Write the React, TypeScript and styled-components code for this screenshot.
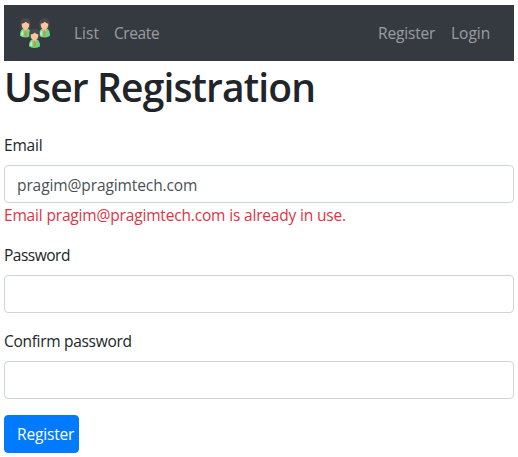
import React from "react";
import styled, { createGlobalStyle } from "styled-components";

const GlobalStyle = createGlobalStyle`
  *, *::before, *::after { box-sizing: border-box; }
  body {
    margin: 0;
    background: #fff;
    color: #212529;
    font: 400 15.5px/24px "Segoe UI", "Open Sans", "Noto Sans", sans-serif;
  }
`;

const Page = styled.div`
  padding: 5px 4px 0;
`;

const Navbar = styled.nav`
  display: flex;
  align-items: center;
  height: 56px;
  padding: 0 16px;
  background: #343a40;
`;

const Brand = styled.a`
  display: flex;
  margin-right: 16px;
`;

const NavGroup = styled.div<{ $end?: boolean }>`
  display: flex;
  margin-left: ${(p) => (p.$end ? "auto" : "0")};
`;

const NavLink = styled.a<{ $width: number; $spacing?: number }>`
  box-sizing: content-box;
  width: ${(p) => p.$width}px;
  padding: 8px;
  color: rgba(255, 255, 255, 0.5);
  letter-spacing: ${(p) => p.$spacing ?? 0}px;
  white-space: nowrap;
`;

const Title = styled.h1`
  margin: 0 0 22px;
  padding-top: 2px;
  font-size: 39px;
  font-weight: 600;
  line-height: 48px;
  letter-spacing: -0.87px;
  white-space: nowrap;
`;

const Field = styled.div`
  margin-bottom: 16px;
`;

const Label = styled.label<{ $spacing?: number }>`
  display: block;
  margin-bottom: 8px;
  letter-spacing: ${(p) => p.$spacing ?? 0}px;
`;

const Input = styled.input`
  display: block;
  width: 100%;
  height: 38px;
  padding: 7px 12px 5px;
  border: 1px solid #ced4da;
  border-radius: 4px;
  outline: 0;
  background: #fff;
  color: #495057;
  font: inherit;
  letter-spacing: -0.1px;
`;

const ErrorText = styled.div`
  color: #dc3545;
  letter-spacing: -0.17px;
  white-space: nowrap;
`;

const SubmitButton = styled.button`
  display: block;
  width: 75px;
  height: 38px;
  padding: 6px 0 6px 12px;
  border: 1px solid #007bff;
  border-radius: 4px;
  background: #007bff;
  color: #fff;
  font: inherit;
  letter-spacing: -0.17px;
  text-align: left;
`;

const Person = ({ x, y }: { x: number; y: number }) => (
  <g transform={`translate(${x} ${y})`}>
    <path d="M0.2 10.5V5.2Q0.4 0 5.5 0T10.8 5.2V10.5Z" fill="#48474a" />
    <path d="M0 17.5Q0 11.5 3 10.6H8Q11 11.5 11 17.5Q9.5 19.2 5.5 19.2T0 17.5Z" fill="#65d982" />
    <path d="M1 16.8Q1.1 13 3.1 12.2L3.5 17.5Z" fill="#b6f3c9" />
    <path d="M3.7 9H7.3V12L5.5 14L3.7 12Z" fill="#edae84" />
    <path d="M1.7 5.6Q4.8 5.2 5.8 3.6Q7 5.1 9.3 5.6Q9.4 11.1 5.5 11.3T1.7 5.6Z" fill="#fac6a1" />
    <path d="M4.7 12.5H6.3L6.7 17.2L5.5 18.4L4.4 17.2Z" fill="#db8c39" />
  </g>
);

const Logo = () => (
  <svg width="30" height="30" viewBox="0 0 30 30" aria-label="Users">
    <Person x={0} y={0.2} />
    <Person x={19} y={0.2} />
    <Person x={9} y={10.8} />
  </svg>
);

export default function App() {
  return (
    <>
      <GlobalStyle />
      <Page>
        <Navbar>
          <Brand><Logo /></Brand>
          <NavGroup>
            <NavLink $width={24}>List</NavLink>
            <NavLink $width={46} $spacing={-0.4}>Create</NavLink>
          </NavGroup>
          <NavGroup $end>
            <NavLink $width={57} $spacing={-0.17}>Register</NavLink>
            <NavLink $width={39}>Login</NavLink>
          </NavGroup>
        </Navbar>
        <Title>User Registration</Title>
        <form>
          <Field>
            <Label htmlFor="email" $spacing={-0.2}>Email</Label>
            <Input id="email" defaultValue="pragim@pragimtech.com" />
            <ErrorText>Email pragim@pragimtech.com is already in use.</ErrorText>
          </Field>
          <Field>
            <Label htmlFor="password" $spacing={-0.5}>Password</Label>
            <Input id="password" type="password" />
          </Field>
          <Field>
            <Label htmlFor="confirm" $spacing={-0.3}>Confirm password</Label>
            <Input id="confirm" type="password" />
          </Field>
          <SubmitButton type="button">Register</SubmitButton>
        </form>
      </Page>
    </>
  );
}
